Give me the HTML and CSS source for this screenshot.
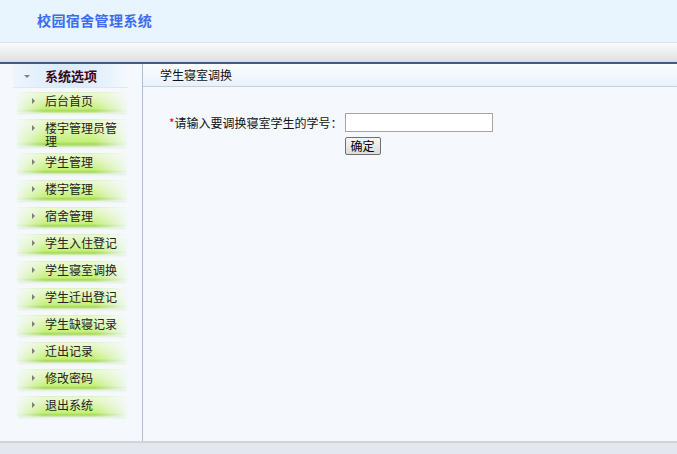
FILE: index.html
```html
<!DOCTYPE html>
<html>
<head lang="zh-CN">
    <meta charset="UTF-8">
    <title>校园宿舍管理系统</title>
    <link rel="stylesheet" href="styles.css">
</head>
<body>
<div class="top">
    <div class="logo">校园宿舍管理系统</div>
</div>
<div class="toolbar"></div>
<div class="main">
    <div class="side">
        <div class="side-title"><span class="down"></span>系统选项</div>
        <ul class="menu">
            <li><a href="#">后台首页</a></li>
            <li><a href="#">楼宇管理员管理</a></li>
            <li><a href="#">学生管理</a></li>
            <li><a href="#">楼宇管理</a></li>
            <li><a href="#">宿舍管理</a></li>
            <li><a href="#">学生入住登记</a></li>
            <li><a href="#">学生寝室调换</a></li>
            <li><a href="#">学生迁出登记</a></li>
            <li><a href="#">学生缺寝记录</a></li>
            <li><a href="#">迁出记录</a></li>
            <li><a href="#">修改密码</a></li>
            <li><a href="#">退出系统</a></li>
        </ul>
    </div>
    <div class="content">
        <div class="content-title">学生寝室调换</div>
        <form class="form" action="#">
            <label class="label" for="xh"><span class="star">*</span>请输入要调换寝室学生的学号：</label>
            <input class="text" id="xh" type="text">
            <span></span>
            <button class="btn" type="button">确定</button>
        </form>
    </div>
</div>
<div class="footer"></div>
</body>
</html>
```

FILE: styles.css
```css
body{
    margin: 0;
    font-family: "Noto Sans CJK SC", "DejaVu Sans", sans-serif;
    font-size: 12px;
    color: #111;
    background: #f5f9fe;
}
.top{
    height: 42px;
    background: #e8f4fe;
    border-bottom: 1px solid #dce2ee;
}
.logo{
    padding-left: 37px;
    line-height: 40px;
    font-size: 14px;
    font-weight: bold;
    letter-spacing: 0.4px;
    color: #3b6cf2;
}
.toolbar{
    height: 18px;
    background: linear-gradient(#fbfbfb, #dfe1e4);
    border-bottom: 1px solid #d7dade;
    box-shadow: 0 2px 0 #3d5d90;
    margin-bottom: 2px;
}
.main{
    display: flex;
    height: 377px;
}
.side{
    width: 142px;
    border-right: 1px solid #a9bfd6;
}
.side-title{
    position: relative;
    margin-left: 13px;
    width: 115px;
    height: 24px;
    line-height: 24px;
    padding-left: 32px;
    box-sizing: border-box;
    font-size: 13px;
    font-weight: bold;
    color: #3a0612;
    background: linear-gradient(90deg, #eef5fc 0%, #d9ebfd 45%, #e6f1fc 80%, rgba(245,249,254,0) 100%);
    border-bottom: 1px solid #dfe8f2;
}
.down{
    position: absolute;
    left: 11px;
    top: 11px;
    border-left: 3px solid transparent;
    border-right: 3px solid transparent;
    border-top: 3px solid #7a8290;
}
.menu{
    list-style: none;
    margin: 4px 0 0 17px;
    padding: 0;
}
.menu li{
    min-height: 21px;
    width: 110px;
    margin-bottom: 6px;
    background:
        linear-gradient(90deg, rgba(245,249,254,0.85) 0%, rgba(245,249,254,0) 25%, rgba(245,249,254,0) 70%, rgba(245,249,254,0.9) 100%),
        linear-gradient(#d6f0b4 0%, #eaf9d2 8%, #dcf5b0 40%, #c4f078 80%, #a4d85a 90%, #d8efc2 100%);
    box-shadow: 0 2px 2px -1px #e4eed8;
}
.menu a{
    position: relative;
    display: block;
    padding: 3px 0 0 28px;
    line-height: 12.5px;
    color: #222;
    text-decoration: none;
}
.menu a:before{
    content: "";
    position: absolute;
    left: 15px;
    top: 6px;
    border-top: 3px solid transparent;
    border-bottom: 3px solid transparent;
    border-left: 3px solid #7d7d7d;
}
.content{
    flex: 1;
}
.content-title{
    height: 22px;
    line-height: 22px;
    padding-left: 17px;
    background: linear-gradient(#fbfdff, #e9f1fb);
    border-bottom: 1px solid #c3d4df;
}
.form{
    display: grid;
    grid-template-columns: auto auto;
    justify-content: start;
    align-items: center;
    row-gap: 5px;
    column-gap: 2px;
    margin: 26px 0 0 26px;
}
.star{
    color: #e00;
}
.text{
    width: 148px;
    height: 19px;
    box-sizing: border-box;
    margin: 0;
    border: 1px solid #a5a5a5;
    background: #fff;
}
.btn{
    justify-self: start;
    width: 36px;
    height: 18px;
    padding: 0;
    font-family: "Noto Sans CJK SC", sans-serif;
    font-size: 12px;
    line-height: 14px;
    color: #000;
    border: 1px solid #707070;
    border-radius: 2px;
    background: linear-gradient(#f6f6f6, #dcdcdc);
}
.footer{
    border-top: 2px solid #d3d3d3;
    height: 11px;
    background: #e3e7ef;
}
```
